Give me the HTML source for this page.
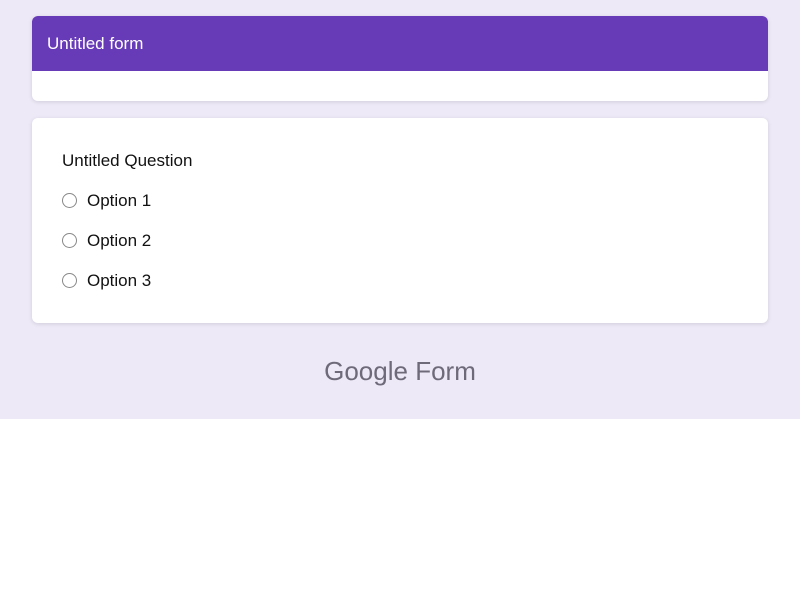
<!DOCTYPE html>
<html><head><style>
html,body{margin:0;padding:0;width:800px;height:600px;background:#fff;font-family:"Liberation Sans",sans-serif;}
.bg{position:absolute;left:0;top:0;width:800px;height:419px;background:#ede9f7;}
.card{position:absolute;left:32px;width:736px;background:#fff;border-radius:6px;box-shadow:0 1px 4px rgba(0,0,0,0.12);overflow:hidden;}
.hdr{height:55px;background:#673ab7;color:#fff;font-size:17px;line-height:56px;padding-left:15px;}
.q{position:absolute;left:30px;font-size:17px;color:#111;}
.r{position:absolute;left:30px;width:13px;height:13px;border:1px solid #888;border-radius:50%;}
.o{position:absolute;left:55px;font-size:17px;color:#111;}
.ft{position:absolute;top:356px;left:0;width:800px;text-align:center;font-size:26px;color:#6e6a7a;}
</style></head><body>
<div class="bg"></div>
<div class="card" style="top:16px;height:85px"><div class="hdr">Untitled form</div></div>
<div class="card" style="top:118px;height:205px">
<div class="q" style="top:33px">Untitled Question</div>
<div class="r" style="top:75px"></div><div class="o" style="top:73px">Option 1</div>
<div class="r" style="top:115px"></div><div class="o" style="top:113px">Option 2</div>
<div class="r" style="top:155px"></div><div class="o" style="top:153px">Option 3</div>
</div>
<div class="ft">Google Form</div>
</body></html>
